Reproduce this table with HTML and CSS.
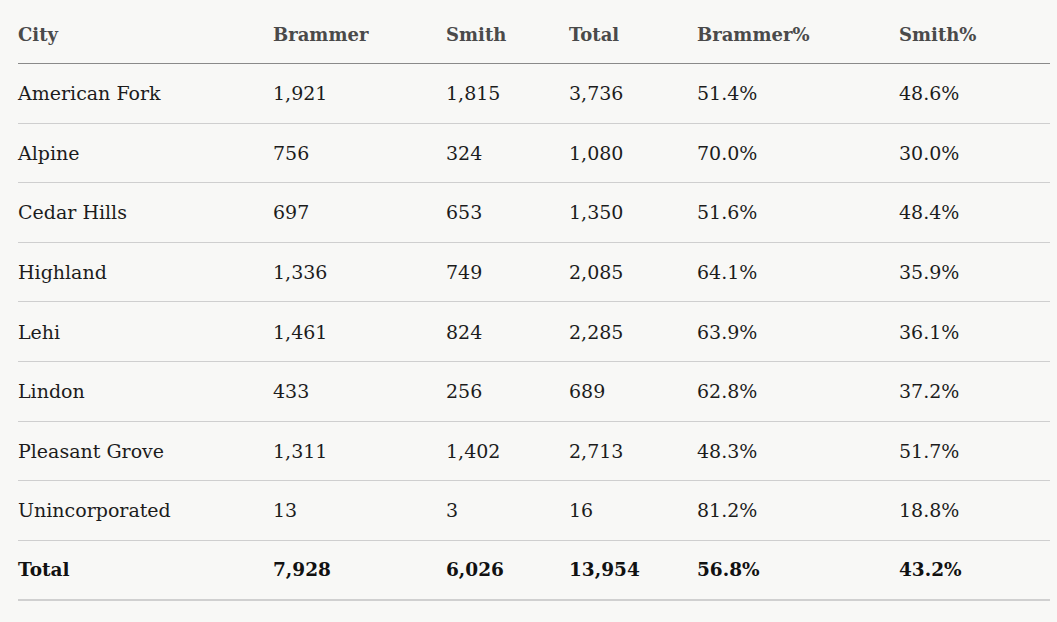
FILE: index.html
```html
<!DOCTYPE html>
<html lang="en">
<head>
<meta charset="utf-8">
<title>Results by City</title>
<link rel="stylesheet" href="styles.css">
</head>
<body>
<table class="results">
  <colgroup>
    <col class="c-city"><col class="c-b"><col class="c-s"><col class="c-t"><col class="c-bp"><col class="c-sp">
  </colgroup>
  <thead>
    <tr><th>City</th><th>Brammer</th><th>Smith</th><th>Total</th><th>Brammer%</th><th>Smith%</th></tr>
  </thead>
  <tbody>
    <tr><td>American Fork</td><td>1,921</td><td>1,815</td><td>3,736</td><td>51.4%</td><td>48.6%</td></tr>
    <tr><td>Alpine</td><td>756</td><td>324</td><td>1,080</td><td>70.0%</td><td>30.0%</td></tr>
    <tr><td>Cedar Hills</td><td>697</td><td>653</td><td>1,350</td><td>51.6%</td><td>48.4%</td></tr>
    <tr><td>Highland</td><td>1,336</td><td>749</td><td>2,085</td><td>64.1%</td><td>35.9%</td></tr>
    <tr><td>Lehi</td><td>1,461</td><td>824</td><td>2,285</td><td>63.9%</td><td>36.1%</td></tr>
    <tr><td>Lindon</td><td>433</td><td>256</td><td>689</td><td>62.8%</td><td>37.2%</td></tr>
    <tr><td>Pleasant Grove</td><td>1,311</td><td>1,402</td><td>2,713</td><td>48.3%</td><td>51.7%</td></tr>
    <tr><td>Unincorporated</td><td>13</td><td>3</td><td>16</td><td>81.2%</td><td>18.8%</td></tr>
    <tr class="total"><td>Total</td><td>7,928</td><td>6,026</td><td>13,954</td><td>56.8%</td><td>43.2%</td></tr>
  </tbody>
</table>
</body>
</html>
```
FILE: styles.css
```css
html, body {
  margin: 0;
  background: #f8f8f6;
}
body {
  padding: 5px 7px 0 18px;
  font-family: "DejaVu Serif", "Liberation Serif", serif;
  color: #1c1c1c;
}
.results {
  width: 1032px;
  border-collapse: collapse;
  table-layout: fixed;
}
.c-city { width: 255px; }
.c-b { width: 173px; }
.c-s { width: 123px; }
.c-t { width: 128px; }
.c-bp { width: 202px; }
.c-sp { width: 151px; }
.results th {
  text-align: left;
  font-weight: bold;
  font-size: 18px;
  color: #4a4a4a;
  height: 58px;
  padding: 0;
  vertical-align: middle;
  border-bottom: 1.5px solid #8a8a8a;
}
.results td {
  font-size: 19px;
  height: 58.6px;
  padding: 0;
  vertical-align: middle;
  border-bottom: 1px solid #cfcfcf;
}
.results .total td {
  font-size: 18.5px;
  font-weight: bold;
  color: #111;
  height: 58px;
  border-bottom: 2px solid #d0d0d0;
}
```
